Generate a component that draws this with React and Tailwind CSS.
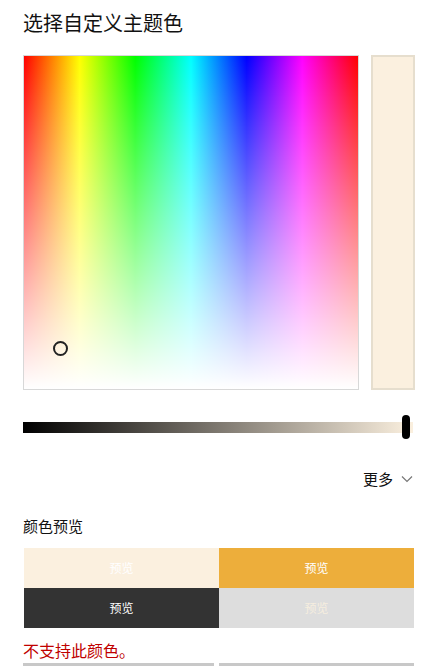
import React from "react";

const font = { fontFamily: '"Noto Sans CJK SC", "Noto Sans", sans-serif' };

const PreviewCell = ({ bg, fg }) => (
  <div className={`h-[40px] flex items-center justify-center text-[12px] ${bg} ${fg}`}>预览</div>
);

const App = () => {
  return (
    <div className="w-[438px] h-[666px] overflow-hidden bg-white px-[23px] pt-[6px]" style={font}>
      <div className="h-[49px] text-[20px] leading-[34px] text-[#111]">选择自定义主题色</div>

      <div className="flex">
        {/* spectrum */}
        <div className="relative w-[336px] h-[335px] border border-[#d8d8d8] bg-[linear-gradient(to_right,#ff0000,#ffff00,#00ff00,#00ffff,#0000ff,#ff00ff,#ff0000)]">
          <div className="absolute inset-0 bg-linear-to-b from-transparent to-white" />
          <div className="absolute left-[29px] top-[285px] w-[15px] h-[15px] rounded-full border-2 border-[#222]" />
        </div>
        <div className="ml-[12px] w-[44px] h-[335px] border-2 border-[#e6dece] bg-[#fbf0df]" />
      </div>

      {/* value slider */}
      <div className="relative mt-[32px] h-[11px] w-[390px] bg-[linear-gradient(to_right,#000000,#fbf0df)]">
        <div className="absolute left-[379px] top-[-7px] w-[8px] h-[24px] rounded-full bg-black" />
      </div>

      <div className="mt-[35px] flex justify-end items-center pr-[2px] text-[15px] text-[#111] h-[22px]">
        <span>更多</span>
        <svg className="ml-[8px] w-[12px] h-[12px]" viewBox="0 0 12 12" fill="none" stroke="#777" strokeWidth="1.2">
          <path d="M1 3.5l5 5 5-5" />
        </svg>
      </div>

      <div className="mt-[25px] text-[15px] leading-[22px] text-[#111]">颜色预览</div>

      <div className="mt-[11px] ml-[1px] w-[390px] grid grid-cols-2">
        <PreviewCell bg="bg-[#fbf0df]" fg="text-white" />
        <PreviewCell bg="bg-[#edae3b]" fg="text-white" />
        <PreviewCell bg="bg-[#333333]" fg="text-white" />
        <PreviewCell bg="bg-[#dddddd]" fg="text-[#f6eedf]" />
      </div>

      <div className="mt-[11px] text-[16px] leading-[22px] text-[#c00000]">不支持此颜色。</div>

      <div className="mt-[2px] flex gap-[5px]">
        <button className="w-[191px] h-[32px] bg-[#c8c8c8]" />
        <button className="w-[195px] h-[32px] bg-[#c8c8c8]" />
      </div>
    </div>
  );
};

export default App;
